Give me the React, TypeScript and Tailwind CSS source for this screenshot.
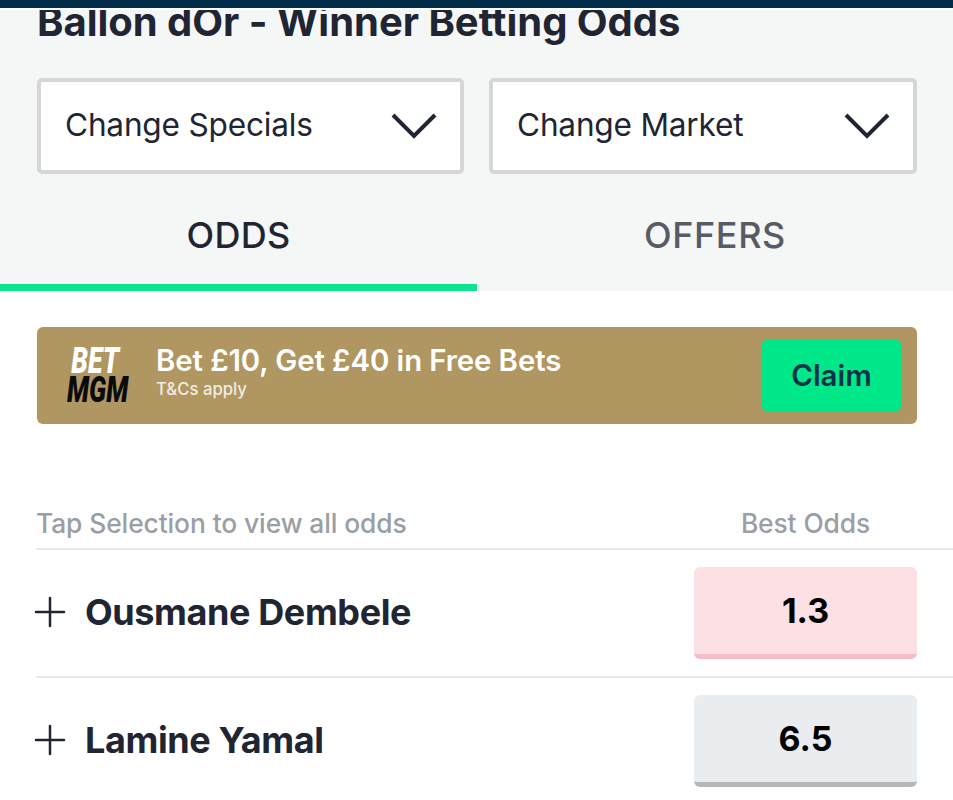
import * as React from 'react'
import { Plus } from 'lucide-react'

const FONT = 'font-["Inter","Liberation_Sans",sans-serif]'

const SelectBox: React.FC<{ label: string; width: string }> = ({ label, width }) => (
  <div className={`${width} h-[96px] flex items-center justify-between pl-[24px] pr-[23px] bg-white border-[4px] border-[#d5d6d6] rounded-[5px]`}>
    <span className="text-[31.6px] leading-none text-[#1f2533] tracking-[-0.2px] pb-[3px]">{label}</span>
    <svg viewBox="0 0 46 28" className="w-[46px] h-[28px] text-[#1f2533]" fill="none" stroke="currentColor" strokeWidth="4">
      <polyline points="2,3 23,24 44,3" />
    </svg>
  </div>
)

const OddsRow: React.FC<{ name: string; odds: string; hot?: boolean }> = ({ name, odds, hot }) => (
  <div className="h-[128px] ml-[36px] flex items-center justify-between pr-[36px] border-b-2 border-[#e8e9ea] last:border-transparent">
    <div className="flex items-center pb-[3px]">
      <Plus className="w-[48px] h-[48px] text-[#1f2533] -ml-[10px]" strokeWidth={1.25} />
      <span className="ml-[11px] text-[36px] leading-none font-bold text-[#1f2533] tracking-[-0.4px]">{name}</span>
    </div>
    <div
      className={`w-[223px] h-[92px] flex items-center justify-center rounded-[6px] border-b-[5px] text-[34px] font-bold text-black ${
        hot ? 'bg-[#fde0e4] border-[#f7bcc5]' : 'bg-[#e9edf0] border-[#b5b7b9]'
      }`}
    >
      {odds}
    </div>
  </div>
)

export default function App() {
  return (
    <div className={`w-[953px] h-[800px] overflow-hidden bg-white ${FONT}`}>
      <div className="h-[8px] bg-[#012d4a]" />
      <div className="h-[2px] bg-white" />

      {/* Header */}
      <div className="bg-[#f5f7f7] h-[281px] flex flex-col overflow-hidden">
        <h1 className="-mt-[9px] ml-[37px] h-[42px] text-[40px] leading-[42px] font-bold text-[#1f2533] whitespace-nowrap tracking-[-0.03px]">
          Ballon dOr - Winner Betting Odds
        </h1>
        <div className="mt-[35px] flex gap-[25px] pl-[37px] pr-[36px]">
          <SelectBox label="Change Specials" width="w-[427px]" />
          <SelectBox label="Change Market" width="w-[428px]" />
        </div>
        <div className="flex flex-1">
          <div className="w-[477px] flex items-center justify-center border-b-[7px] border-[#0ae58e] text-[36px] font-medium text-[#1f2533] pt-[12px] tracking-[0.3px]">
            ODDS
          </div>
          <div className="flex-1 flex items-center justify-center text-[36px] font-medium text-[#565b66] pt-[5px] tracking-[0.6px]">
            OFFERS
          </div>
        </div>
      </div>

      {/* Offer banner */}
      <div className="mt-[36px] ml-[37px] mr-[36px] h-[97px] bg-[#b09660] rounded-[6px] flex items-center pl-[30px] pr-[15px]">
        <div className="w-[62px] flex flex-col items-center font-['Roboto',sans-serif] font-black italic leading-none">
          <span className="text-[37px] h-[28px] leading-[28px] text-white scale-x-[.72] -ml-[5px]">BET</span>
          <span className="text-[37px] h-[29px] leading-[29px] text-[#0b0b0b] scale-x-[.7]">MGM</span>
        </div>
        <div className="ml-[27px] flex flex-col pb-[6px]">
          <span className="text-[29.4px] leading-[30px] font-semibold text-white tracking-[-0.1px]">Bet £10, Get £40 in Free Bets</span>
          <span className="mt-[3px] text-[16.7px] leading-[20px] font-medium text-[#f1ece0]">T&amp;Cs apply</span>
        </div>
        <div className="ml-auto w-[141px] h-[73px] bg-[#00e88a] rounded-[8px] flex items-center justify-center text-[29.5px] font-semibold text-[#033349]">
          Claim
        </div>
      </div>

      {/* Odds table */}
      <div className="mt-[80px] ml-[36px] h-[46px] flex items-start justify-between border-b-2 border-[#e8e9ea]">
        <span className="text-[26.4px] leading-[38px] font-medium text-[#9b9ea5] tracking-[-0.1px]">Tap Selection to view all odds</span>
        <span className="w-[223px] mr-[36px] text-center text-[26.4px] leading-[38px] font-medium text-[#9b9ea5] tracking-[-0.1px]">Best Odds</span>
      </div>
      <OddsRow name="Ousmane Dembele" odds="1.3" hot />
      <OddsRow name="Lamine Yamal" odds="6.5" />
    </div>
  )
}
